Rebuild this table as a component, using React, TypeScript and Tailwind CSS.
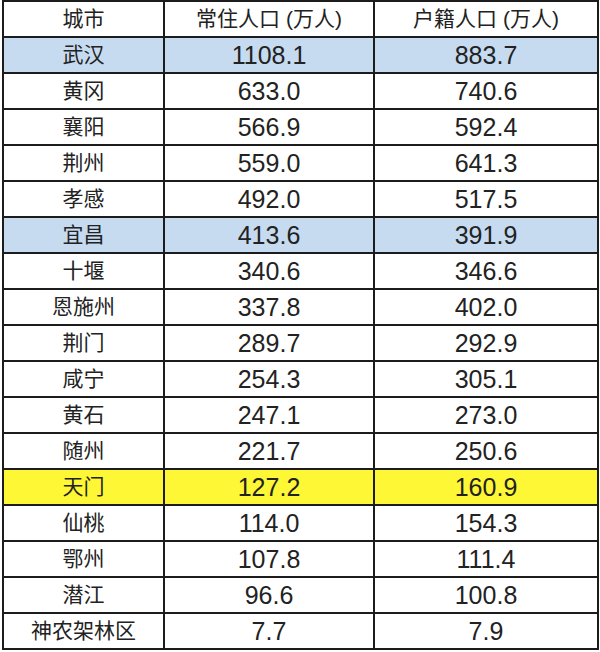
const rows: { city: string; resident: string; registered: string; tone?: "blue" | "yellow" }[] = [
  { city: "武汉", resident: "1108.1", registered: "883.7", tone: "blue" },
  { city: "黄冈", resident: "633.0", registered: "740.6" },
  { city: "襄阳", resident: "566.9", registered: "592.4" },
  { city: "荆州", resident: "559.0", registered: "641.3" },
  { city: "孝感", resident: "492.0", registered: "517.5" },
  { city: "宜昌", resident: "413.6", registered: "391.9", tone: "blue" },
  { city: "十堰", resident: "340.6", registered: "346.6" },
  { city: "恩施州", resident: "337.8", registered: "402.0" },
  { city: "荆门", resident: "289.7", registered: "292.9" },
  { city: "咸宁", resident: "254.3", registered: "305.1" },
  { city: "黄石", resident: "247.1", registered: "273.0" },
  { city: "随州", resident: "221.7", registered: "250.6" },
  { city: "天门", resident: "127.2", registered: "160.9", tone: "yellow" },
  { city: "仙桃", resident: "114.0", registered: "154.3" },
  { city: "鄂州", resident: "107.8", registered: "111.4" },
  { city: "潜江", resident: "96.6", registered: "100.8" },
  { city: "神农架林区", resident: "7.7", registered: "7.9" },
];

const cell =
  "h-[36px] flex items-center justify-center border-r-2 border-b-2 border-[#1c1c1c] text-[#222]";
const cjk = "text-[21px]";
const num = "text-[25px] pt-px";

export default function App() {
  return (
    <div
      className="w-[600px] h-[652px] bg-white"
      style={{ fontFamily: '"Liberation Sans", "Noto Sans CJK SC", sans-serif' }}
    >
      <div className="ml-[2px] w-[597px] border-t-2 border-l-2 border-[#1c1c1c] grid grid-cols-[161px_210px_224px]">
        <div className={`${cell} ${cjk}`}>城市</div>
        <div className={`${cell} ${cjk} gap-[6px]`}>
          <span>常住人口</span>
          <span>(万人)</span>
        </div>
        <div className={`${cell} ${cjk} gap-[6px]`}>
          <span>户籍人口</span>
          <span>(万人)</span>
        </div>
        {rows.map((r) => {
          const bg =
            r.tone === "blue" ? "bg-[#c6dbf0]" : r.tone === "yellow" ? "bg-[#fdf735]" : "bg-white";
          return (
            <div key={r.city} className="contents">
              <div className={`${cell} ${cjk} ${bg}`}>{r.city}</div>
              <div className={`${cell} ${num} ${bg}`}>{r.resident}</div>
              <div className={`${cell} ${num} ${bg}`}>{r.registered}</div>
            </div>
          );
        })}
      </div>
    </div>
  );
}
